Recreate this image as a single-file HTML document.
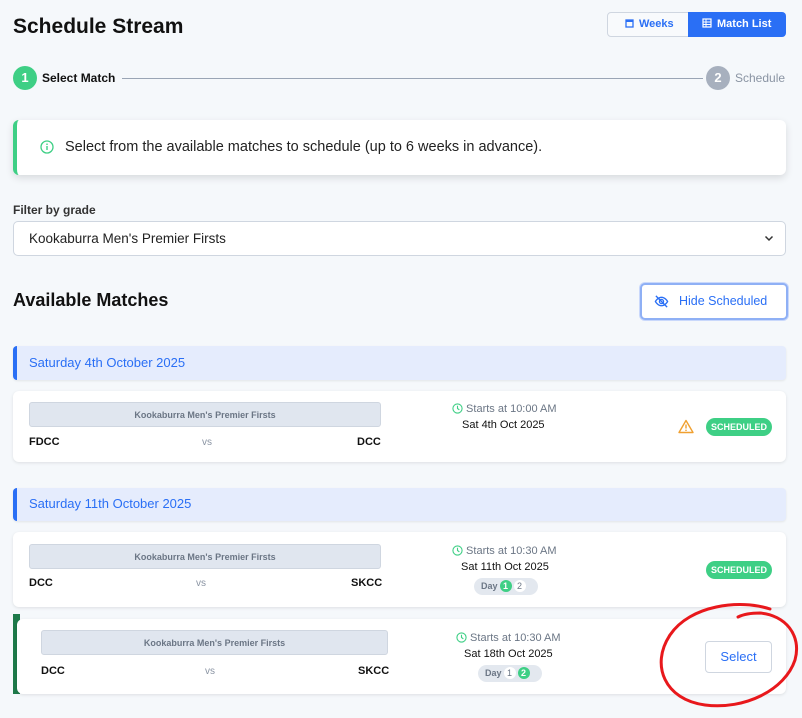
<!DOCTYPE html><html><head><meta charset="utf-8"><style>
*{box-sizing:border-box;margin:0;padding:0}
body{width:802px;height:718px;background:#f5f8fb;font-family:"Liberation Sans",sans-serif;position:relative;overflow:hidden;color:#111}
.a{position:absolute}
.card{position:absolute;background:#fff;border-radius:6px;box-shadow:0 1px 3px rgba(0,0,0,.1)}
.bar{position:absolute;background:#e0e6ef;border:1px solid #cfd6e0;border-radius:3px;font-size:9px;font-weight:bold;color:#6b7685;text-align:center;line-height:24px}
.tm{position:absolute;font-size:11px;font-weight:bold}
.vs{position:absolute;font-size:10px;color:#8a94a3}
.st{position:absolute;font-size:11px;color:#6b7685;white-space:nowrap}
.dt{position:absolute;font-size:11px;color:#111;white-space:nowrap}
.badge{position:absolute;background:#3ecf85;color:#fff;font-size:9px;font-weight:bold;border-radius:9px;text-align:center;line-height:18px}
.dh{position:absolute;left:13px;width:773px;background:#e5ecfd;border-left:4px solid #2a6ff5;border-radius:4px;color:#2a6ff5;font-size:13px;padding-left:12px;box-shadow:0 1px 2px rgba(0,0,0,.08)}
.pill{position:absolute;background:#e3e8ef;border-radius:9px;height:17px;font-size:9px;font-weight:bold;color:#6b7685;line-height:17px;padding-left:7px}
.pill span{display:inline-block;width:12px;height:12px;border-radius:6px;text-align:center;line-height:12px;margin-left:2px;background:#fff;font-weight:normal;color:#6b7685}
.pill span.g{background:#3ecf85;color:#fff;font-weight:bold}
</style></head><body>
<div class="a" style="left:13px;top:15px;font-size:21px;font-weight:bold">Schedule Stream</div>
<div class="a" style="left:607px;top:12px;width:82px;height:25px;border:1px solid #cfd6e0;border-radius:4px 0 0 4px;background:#f8fafc;color:#2a6ff5;font-size:11px;font-weight:bold;line-height:23px;padding-left:17px"><svg width="9" height="10" viewBox="0 0 9 10" style="vertical-align:-1px;margin-right:5px"><rect x="1" y="2" width="7" height="7" fill="none" stroke="#2a6ff5" stroke-width="1.3"/><rect x="1" y="2" width="7" height="2" fill="#2a6ff5"/></svg>Weeks</div>
<div class="a" style="left:688px;top:12px;width:98px;height:25px;background:#2a6ff5;border-radius:0 4px 4px 0;color:#fff;font-size:11px;font-weight:bold;line-height:25px;padding-left:14px"><svg width="10" height="10" viewBox="0 0 10 10" style="vertical-align:-1px;margin-right:5px"><rect x="1" y="1" width="8" height="8" fill="none" stroke="#fff" stroke-width="1.2"/><path d="M1 4h8M1 6.5h8M4 1v8" stroke="#fff" stroke-width="1"/></svg>Match List</div>
<div class="a" style="left:13px;top:66px;width:24px;height:24px;border-radius:12px;background:#3ecf85;color:#fff;font-weight:bold;font-size:13px;text-align:center;line-height:24px">1</div>
<div class="a" style="left:42px;top:71px;font-size:12px;font-weight:bold">Select Match</div>
<div class="a" style="left:122px;top:78px;width:581px;height:1px;background:#9aa5b5"></div>
<div class="a" style="left:706px;top:66px;width:24px;height:24px;border-radius:12px;background:#a7b0be;color:#fff;font-weight:bold;font-size:13px;text-align:center;line-height:24px">2</div>
<div class="a" style="left:735px;top:71px;font-size:12px;color:#8a94a3">Schedule</div>
<div class="card" style="left:13px;top:120px;width:773px;height:55px;border-left:4px solid #3ecf85;box-shadow:0 3px 8px rgba(0,0,0,.12)"></div>
<svg class="a" style="left:40px;top:140px" width="14" height="14" viewBox="0 0 14 14"><circle cx="7" cy="7" r="6" fill="none" stroke="#3ecf85" stroke-width="1.3"/><path d="M7 6v4" stroke="#3ecf85" stroke-width="1.4"/><circle cx="7" cy="4.2" r=".8" fill="#3ecf85"/></svg>
<div class="a" style="left:65px;top:139px;font-size:14.5px;color:#222">Select from the available matches to schedule (up to 6 weeks in advance).</div>
<div class="a" style="left:13px;top:203px;font-size:12px;font-weight:bold;color:#333">Filter by grade</div>
<div class="a" style="left:13px;top:221px;width:773px;height:35px;background:#fff;border:1px solid #cfd6e0;border-radius:5px;font-size:13.5px;line-height:33px;padding-left:15px;color:#222">Kookaburra Men's Premier Firsts</div>
<svg class="a" style="left:764px;top:235px" width="10" height="7" viewBox="0 0 10 7"><path d="M1.5 1.5l3.5 3.5 3.5-3.5" fill="none" stroke="#333" stroke-width="1.5"/></svg>
<div class="a" style="left:13px;top:290px;font-size:18px;font-weight:bold">Available Matches</div>
<div class="a" style="left:640px;top:283px;width:148px;height:37px;border:2px solid #8fb0f5;border-radius:5px;background:#fff;box-shadow:0 0 0 1px #c9d8fb;color:#2a6ff5;font-size:12.5px;line-height:33px;padding-left:37px">Hide Scheduled</div>
<svg class="a" style="left:654px;top:294px" width="15" height="15" viewBox="0 0 16 16"><path d="M1.5 8s2.5-4.5 6.5-4.5S14.5 8 14.5 8s-2.5 4.5-6.5 4.5S1.5 8 1.5 8z" fill="none" stroke="#2a6ff5" stroke-width="1.4"/><circle cx="8" cy="8" r="2.2" fill="none" stroke="#2a6ff5" stroke-width="1.4"/><path d="M2 2l12 12" stroke="#2a6ff5" stroke-width="1.4"/></svg>
<div class="dh" style="top:346px;height:34px;line-height:33px">Saturday 4th October 2025</div>
<div class="card" style="left:13px;top:391px;width:773px;height:71px"></div>
<div class="bar" style="left:29px;top:402px;width:352px;height:25px">Kookaburra Men's Premier Firsts</div>
<div class="tm" style="left:29px;top:436px">FDCC</div><div class="vs" style="left:202px;top:437px">vs</div><div class="tm" style="left:357px;top:436px">DCC</div>
<div class="st" style="left:452px;top:403px"><svg width="11" height="11" viewBox="0 0 12 12" style="vertical-align:-2px"><circle cx="6" cy="6" r="5" fill="none" stroke="#3ecf85" stroke-width="1.2"/><path d="M6 3v3l2 1.5" fill="none" stroke="#3ecf85" stroke-width="1.2"/></svg> Starts at 10:00 AM</div>
<div class="dt" style="left:462px;top:419px">Sat 4th Oct 2025</div>
<svg class="a" style="left:678px;top:419px" width="16" height="15" viewBox="0 0 16 15"><path d="M8 1.5L15 13.5H1z" fill="none" stroke="#f0a030" stroke-width="1.4" stroke-linejoin="round"/><path d="M8 5.5v4" stroke="#f0a030" stroke-width="1.4"/><circle cx="8" cy="11.3" r=".8" fill="#f0a030"/></svg>
<div class="badge" style="left:706px;top:418px;width:66px">SCHEDULED</div>
<div class="dh" style="top:488px;height:33px;line-height:32px">Saturday 11th October 2025</div>
<div class="card" style="left:13px;top:532px;width:773px;height:75px"></div>
<div class="bar" style="left:29px;top:544px;width:352px;height:25px">Kookaburra Men's Premier Firsts</div>
<div class="tm" style="left:29px;top:577px">DCC</div><div class="vs" style="left:196px;top:578px">vs</div><div class="tm" style="left:351px;top:577px">SKCC</div>
<div class="st" style="left:452px;top:545px"><svg width="11" height="11" viewBox="0 0 12 12" style="vertical-align:-2px"><circle cx="6" cy="6" r="5" fill="none" stroke="#3ecf85" stroke-width="1.2"/><path d="M6 3v3l2 1.5" fill="none" stroke="#3ecf85" stroke-width="1.2"/></svg> Starts at 10:30 AM</div>
<div class="dt" style="left:461px;top:561px">Sat 11th Oct 2025</div>
<div class="pill" style="left:474px;top:578px;width:64px">Day<span class="g">1</span><span>2</span></div>
<div class="badge" style="left:706px;top:561px;width:66px">SCHEDULED</div>
<div class="a" style="left:13px;top:614px;width:7px;height:80px;background:#1e7a4a"></div>
<div class="card" style="left:17px;top:619px;width:769px;height:75px"></div>
<div class="bar" style="left:41px;top:630px;width:347px;height:25px">Kookaburra Men's Premier Firsts</div>
<div class="tm" style="left:41px;top:665px">DCC</div><div class="vs" style="left:205px;top:666px">vs</div><div class="tm" style="left:358px;top:665px">SKCC</div>
<div class="st" style="left:456px;top:632px"><svg width="11" height="11" viewBox="0 0 12 12" style="vertical-align:-2px"><circle cx="6" cy="6" r="5" fill="none" stroke="#3ecf85" stroke-width="1.2"/><path d="M6 3v3l2 1.5" fill="none" stroke="#3ecf85" stroke-width="1.2"/></svg> Starts at 10:30 AM</div>
<div class="dt" style="left:464px;top:648px">Sat 18th Oct 2025</div>
<div class="pill" style="left:478px;top:665px;width:64px">Day<span>1</span><span class="g">2</span></div>
<div class="a" style="left:705px;top:641px;width:67px;height:32px;border:1px solid #cfd6e0;border-radius:4px;background:#fff;color:#2a6ff5;font-size:13px;text-align:center;line-height:30px">Select</div>
<svg class="a" style="left:650px;top:595px" width="152" height="123" viewBox="0 0 152 123"><path d="M120 14C90 4 40 10 20 40C0 70 15 105 55 110C95 115 135 95 145 65C152 40 135 20 110 18C100 18 92 20 88 22" fill="none" stroke="#e8181c" stroke-width="3" stroke-linecap="round"/></svg>
</body></html>
